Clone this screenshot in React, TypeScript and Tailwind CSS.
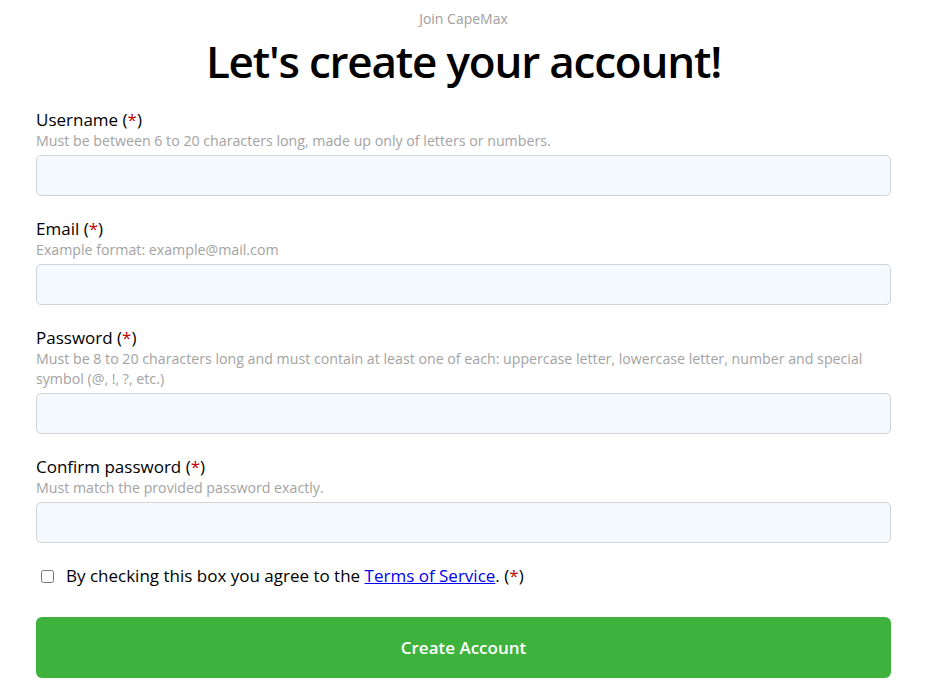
const fields = [
  {
    id: 'username',
    label: 'Username',
    hint: 'Must be between 6 to 20 characters long, made up only of letters or numbers.',
    type: 'text',
  },
  { id: 'email', label: 'Email', hint: 'Example format: example@mail.com', type: 'email' },
  {
    id: 'password',
    label: 'Password',
    hint: 'Must be 8 to 20 characters long and must contain at least one of each: uppercase letter, lowercase letter, number and special symbol (@, !, ?, etc.)',
    type: 'password',
  },
  {
    id: 'confirm',
    label: 'Confirm password',
    hint: 'Must match the provided password exactly.',
    type: 'password',
  },
];

function Required() {
  return (
    <>
      {' '}(<span className="text-[#c00000]">*</span>)
    </>
  );
}

export default function App() {
  return (
    <div className="min-h-[692px] bg-white pl-[36px] pr-[41px] font-['Open_Sans',sans-serif] text-black">
      <p className="pt-[9px] text-center text-[14px] leading-[20px] text-[#a0a0a0]">Join CapeMax</p>
      <h1 className="mt-[2px] text-center text-[44px] font-semibold leading-[60px] tracking-[-1.2px]">
        Let's create your account!
      </h1>

      <form className="mt-[18px]">
        {fields.map((f) => (
          <div key={f.id} className="mb-[22px]">
            <label htmlFor={f.id} className="block text-[17px] leading-[22px]">
              {f.label}
              <Required />
            </label>
            <p className="text-[14.2px] leading-[20px] text-[#a3a3a3]">{f.hint}</p>
            <input
              id={f.id}
              type={f.type}
              className="mt-[4px] block h-[41px] w-full rounded-[5px] border border-[#cfd4d9] bg-[#f5faff] px-3 outline-none"
            />
          </div>
        ))}

        <label className="flex items-center gap-[12px] pl-[5px] text-[17px] leading-[22px]">
          <input type="checkbox" className="h-[13px] w-[13px]" />
          <span>
            By checking this box you agree to the{' '}
            <a href="#" className="text-[#0000ee] underline">
              Terms of Service
            </a>
            .<Required />
          </span>
        </label>

        <button
          type="button"
          className="mt-[30px] block h-[61px] w-full rounded-[6px] bg-[#3db33e] text-[17px] font-semibold text-white"
        >
          Create Account
        </button>
      </form>
    </div>
  );
}
